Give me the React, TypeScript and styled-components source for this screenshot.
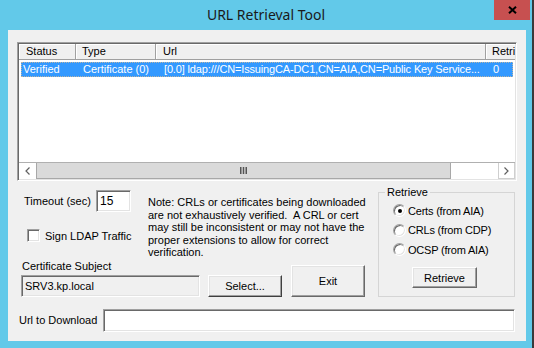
import React from 'react';
import styled, { createGlobalStyle, css } from 'styled-components';

const Global = createGlobalStyle`
  html, body { margin: 0; padding: 0; }
  body {
    font-family: "Liberation Sans", Arial, sans-serif;
    font-size: 11px;
    color: #000;
  }
`;

const sunken = css`
  box-sizing: border-box;
  border: 1px solid;
  border-color: #a0a0a0 #ffffff #ffffff #a0a0a0;
  box-shadow: inset 1px 1px 0 #696969, inset -1px -1px 0 #e3e3e3;
`;

const Window = styled.div`
  width: 534px;
  height: 348px;
  box-sizing: border-box;
  background: #62c9e9;
  border-right: 2px solid #3a3a3a;
  display: flex;
  flex-direction: column;
`;

const TitleBar = styled.div`
  height: 30px;
  display: grid;
  grid-template-columns: 1fr auto 1fr;
  align-items: start;
`;

const Title = styled.div`
  grid-column: 2;
  font-family: "Noto Sans", sans-serif;
  font-size: 14px;
  line-height: 29px;
  color: #1a1a1a;
`;

const CloseButton = styled.div`
  grid-column: 3;
  justify-self: end;
  margin-right: 2px;
  width: 36px;
  height: 20px;
  background: #c75050;
  display: flex;
  align-items: center;
  justify-content: center;
`;

const Client = styled.div`
  margin: 0 6px 7px 8px;
  height: 311px;
  box-sizing: border-box;
  background: #f0f0f0;
  padding: 12px 9px 0 9px;
  display: flex;
  flex-direction: column;
`;

const ListBox = styled.div`
  ${sunken};
  height: 139px;
  background: #fff;
  padding: 1px;
  display: flex;
  flex-direction: column;
  overflow: hidden;
`;

const HeaderRow = styled.div`
  display: grid;
  grid-template-columns: 57px 80px 330px 60px;
  height: 16px;
  flex: none;
  overflow: hidden;
`;

const HeaderCell = styled.div`
  box-sizing: border-box;
  background: #f0f0f0;
  border-right: 1px solid #a0a0a0;
  border-bottom: 1px solid #a0a0a0;
  box-shadow: inset 1px 1px 0 #ffffff;
  padding-left: ${p => p.$pad}px;
  line-height: 15px;
  white-space: nowrap;
  overflow: hidden;
`;

const DataRow = styled.div`
  margin: 2px 2px 0 2px;
  height: 15px;
  box-sizing: border-box;
  background: #3399ff;
  color: #fff;
  border: 1px dotted rgba(240, 190, 130, 0.7);
  display: grid;
  grid-template-columns: 55px 80px 330px 1fr;
  overflow: hidden;
`;

const DataCell = styled.div`
  padding-left: ${p => p.$pad}px;
  line-height: 13px;
  white-space: nowrap;
  overflow: hidden;
  letter-spacing: ${p => (p.$tight ? '-0.15px' : 'normal')};
`;

const HScroll = styled.div`
  margin-top: auto;
  height: 17px;
  display: flex;
  flex: none;
  background: #fff;
  border-top: 1px solid #b0b0b0;
  box-sizing: border-box;
`;

const ArrowButton = styled.div`
  width: 17px;
  box-sizing: border-box;
  background: #fff;
  display: flex;
  align-items: center;
  justify-content: center;
  border: ${p => (p.$boxed ? '1px solid #cfcfcf' : 'none')};
  border-top: none;
`;

const Thumb = styled.div`
  width: 415px;
  box-sizing: border-box;
  background: #dadada;
  border: 1px solid #a8a8a8;
  border-top: none;
  display: flex;
  align-items: center;
  justify-content: center;
`;

const Track = styled.div`
  flex: 1;
  background: #fff;
`;

const Controls = styled.div`
  display: flex;
  margin-top: 4px;
`;

const MainArea = styled.div`
  width: 361px;
  padding-left: 4px;
  box-sizing: border-box;
  display: flex;
  flex-direction: column;
`;

const TopRow = styled.div`
  display: flex;
  margin-top: 5px;
`;

const LeftControls = styled.div`
  width: 127px;
  display: flex;
  flex-direction: column;
`;

const FieldRow = styled.div`
  display: flex;
  align-items: center;
`;

const TimeoutLabel = styled.span`
  width: 75px;
  box-sizing: border-box;
  padding-left: 3px;
`;

const TextBox = styled.div`
  ${sunken};
  width: ${p => p.$w}px;
  height: ${p => p.$h}px;
  background: ${p => (p.$readOnly ? '#f0f0f0' : '#fff')};
  padding: 3px 0 0 3px;
  font-size: ${p => (p.$big ? 12 : 11)}px;
  line-height: 14px;
  white-space: nowrap;
  overflow: hidden;
`;

const CheckRow = styled.label`
  display: flex;
  align-items: center;
  margin-top: 17px;
  height: 13px;
`;

const CheckBox = styled.span`
  ${sunken};
  width: 13px;
  height: 13px;
  margin-left: 6px;
  background: #fff;
`;

const CheckText = styled.span`
  margin-left: 5px;
  font-size: 11px;
`;

const Note = styled.div`
  margin-top: 6px;
  white-space: pre;
  line-height: 12.5px;
  font-size: 11px;
`;

const BottomRow = styled.div`
  display: flex;
  align-items: flex-end;
`;

const CertField = styled.div`
  display: flex;
  flex-direction: column;
`;

const FieldLabel = styled.span`
  line-height: 14px;
  margin-bottom: 2px;
  padding-left: 1px;
  font-size: 11px;
`;

const Button = styled.div`
  box-sizing: border-box;
  width: ${p => p.$w}px;
  height: ${p => p.$h}px;
  margin-left: ${p => p.$ml || 0}px;
  margin-top: ${p => p.$mt || 0}px;
  background: #f0f0f0;
  border: 1px solid;
  border-color: #ffffff ${p => (p.$strong ? '#404040' : '#696969')} ${p => (p.$strong ? '#404040' : '#696969')} #ffffff;
  box-shadow: inset -1px -1px 0 #a0a0a0, inset 1px 1px 0 #e3e3e3;
  display: flex;
  align-items: center;
  justify-content: center;
  font-size: 11px;
`;

const GroupBox = styled.fieldset`
  flex: 1;
  margin: 0 2px 0 0;
  padding: 0 0 0 14px;
  border: 1px solid #d5d5d5;
  min-width: 0;
  display: flex;
  flex-direction: column;
`;

const Legend = styled.legend`
  margin-left: -8px;
  padding: 0 2px;
  line-height: 14px;
  font-size: 11px;
`;

const RadioRow = styled.div`
  display: flex;
  align-items: center;
  height: 13px;
  margin-top: ${p => p.$mt}px;
`;

const Radio = styled.span`
  width: 13px;
  height: 13px;
  box-sizing: border-box;
  border-radius: 50%;
  background: #fff;
  border: 1px solid;
  border-color: #a0a0a0 #ffffff #ffffff #a0a0a0;
  box-shadow: inset 1px 1px 0 #696969, inset -1px -1px 0 #e3e3e3;
  display: flex;
  align-items: center;
  justify-content: center;
`;

const RadioDot = styled.span`
  width: 4px;
  height: 4px;
  border-radius: 50%;
  background: #000;
`;

const RadioText = styled.span`
  margin-left: 2px;
  font-size: 11px;
  letter-spacing: -0.2px;
`;

const UrlRow = styled.div`
  display: flex;
  align-items: center;
  margin-top: 12px;
  padding-left: 2px;
  margin-right: 2px;
`;

const UrlLabel = styled.span`
  width: 84px;
  font-size: 11px;
`;

const UrlInput = styled.div`
  ${sunken};
  flex: 1;
  height: 23px;
  background: #fff;
`;

const Chevron = ({ dir }: { dir: 'l' | 'r' }) => (
  <svg width="5" height="8" viewBox="0 0 5 8">
    <path
      d={dir === 'l' ? 'M4.5 0.5 L1 4 L4.5 7.5' : 'M0.5 0.5 L4 4 L0.5 7.5'}
      fill="none"
      stroke="#606060"
      strokeWidth="1.2"
    />
  </svg>
);

const Grip = () => (
  <svg width="7" height="7" viewBox="0 0 7 7">
    <rect x="0" y="0" width="1.5" height="7" fill="#555" />
    <rect x="2.75" y="0" width="1.5" height="7" fill="#555" />
    <rect x="5.5" y="0" width="1.5" height="7" fill="#555" />
  </svg>
);

export default function App() {
  return (
    <>
      <Global />
      <Window>
        <TitleBar>
          <Title>URL Retrieval Tool</Title>
          <CloseButton>
            <svg width="9" height="8" viewBox="0 0 9 8">
              <path d="M1 0.8 L8 7.2 M8 0.8 L1 7.2" stroke="#000" strokeWidth="2" />
            </svg>
          </CloseButton>
        </TitleBar>
        <Client>
          <ListBox>
            <HeaderRow>
              <HeaderCell $pad={7}>Status</HeaderCell>
              <HeaderCell $pad={6}>Type</HeaderCell>
              <HeaderCell $pad={7}>Url</HeaderCell>
              <HeaderCell $pad={6}>Retrieve</HeaderCell>
            </HeaderRow>
            <DataRow>
              <DataCell $pad={1}>Verified</DataCell>
              <DataCell $pad={6}>Certificate (0)</DataCell>
              <DataCell $pad={7} $tight>[0.0] ldap:///CN=IssuingCA-DC1,CN=AIA,CN=Public Key Service...</DataCell>
              <DataCell $pad={6}>0</DataCell>
            </DataRow>
            <HScroll>
              <ArrowButton>
                <Chevron dir="l" />
              </ArrowButton>
              <Thumb>
                <Grip />
              </Thumb>
              <Track />
              <ArrowButton $boxed>
                <Chevron dir="r" />
              </ArrowButton>
            </HScroll>
          </ListBox>
          <Controls>
            <MainArea>
              <TopRow>
                <LeftControls>
                  <FieldRow>
                    <TimeoutLabel>Timeout (sec)</TimeoutLabel>
                    <TextBox $w={35} $h={22} $big>15</TextBox>
                  </FieldRow>
                  <CheckRow>
                    <CheckBox />
                    <CheckText>Sign LDAP Traffic</CheckText>
                  </CheckRow>
                </LeftControls>
                <Note>
                  {'Note: CRLs or certificates being downloaded\nare not exhaustively verified.  A CRL or cert\nmay still be inconsistent or may not have the\nproper extensions to allow for correct\nverification.'}
                </Note>
              </TopRow>
              <BottomRow>
                <CertField>
                  <FieldLabel>Certificate Subject</FieldLabel>
                  <TextBox $w={179} $h={22} $readOnly>SRV3.kp.local</TextBox>
                </CertField>
                <Button $w={74} $h={22} $ml={8} $strong>Select...</Button>
                <Button $w={74} $h={32} $ml={9}>Exit</Button>
              </BottomRow>
            </MainArea>
            <GroupBox>
              <Legend>Retrieve</Legend>
              <RadioRow $mt={5}>
                <Radio>
                  <RadioDot />
                </Radio>
                <RadioText>Certs (from AIA)</RadioText>
              </RadioRow>
              <RadioRow $mt={6.5}>
                <Radio />
                <RadioText>CRLs (from CDP)</RadioText>
              </RadioRow>
              <RadioRow $mt={6.5}>
                <Radio />
                <RadioText>OCSP (from AIA)</RadioText>
              </RadioRow>
              <Button $w={65} $h={21} $ml={19} $mt={11}>Retrieve</Button>
            </GroupBox>
          </Controls>
          <UrlRow>
            <UrlLabel>Url to Download</UrlLabel>
            <UrlInput />
          </UrlRow>
        </Client>
      </Window>
    </>
  );
}
